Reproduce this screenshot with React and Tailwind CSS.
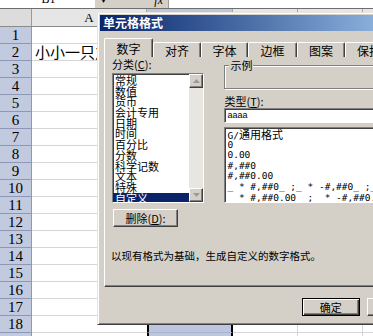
import React from "react";

const cats = ["常规", "数值", "货币", "会计专用", "日期", "时间", "百分比", "分数", "科学记数", "文本", "特殊", "自定义"];
const formats = [
  "0",
  "0.00",
  "#,##0",
  "#,##0.00",
  '_ * #,##0_ ;_ * -#,##0_ ;_ * "-"_ ;_ @_ ',
  '_ * #,##0.00_ ;_ * -#,##0.00_ ;_ * "-"??_ ;_ @_ ',
];
const tabs = [
  { label: "数字", w: "w-[49px]" },
  { label: "对齐", w: "w-[48px]" },
  { label: "字体", w: "w-[47px]" },
  { label: "边框", w: "w-[49px]" },
  { label: "图案", w: "w-[48px]" },
  { label: "保护", w: "w-[48px]" },
];
const rows = Array.from({ length: 19 }, (_, i) => i + 1);

// raised / sunken win98 style edges
const raised = "border-t border-l border-white border-r border-b border-r-[#404040] border-b-[#404040] shadow-[inset_-1px_-1px_0_#808080]";
const sunken = "border-t border-l border-[#808080] border-r border-b border-r-white border-b-white shadow-[inset_1px_1px_0_#404040]";

function Arrow({ down }) {
  return (
    <div className={`w-[14px] h-[14px] bg-[#d4d0c8] flex items-center justify-center ${raised}`}>
      <svg width="7" height="4" viewBox="0 0 7 4">
        {down ? <path d="M0 0h7L3.5 4z" fill="#9a9a9a" /> : <path d="M0 4h7L3.5 0z" fill="#9a9a9a" />}
      </svg>
    </div>
  );
}

function Mnemonic({ text, k }) {
  return (
    <span>
      {text}(<span className="underline">{k}</span>):
    </span>
  );
}

export default function App() {
  return (
    <div className="relative w-[373px] h-[336px] overflow-hidden bg-white text-black font-['Liberation_Serif',serif]">
      {/* formula bar, cut at top */}
      <div className="flex h-[9px] border-b border-[#6e6e6e]">
        <div className="w-[95px] h-full overflow-hidden">
          <div className="-mt-[7px] text-center text-[12px] leading-[12px] pl-[2px]">B1</div>
        </div>
        <div className="w-[73px] h-full overflow-hidden bg-[#d4d0c8] flex justify-between px-[5px]">
          <span className="-mt-[3px] text-[7px] leading-[8px]">▼</span>
          <span className="-mt-[6px] text-[12px] leading-[12px] italic">fx</span>
        </div>
        <div className="flex-1 h-full bg-white border-l border-[#9a9a9a]" />
      </div>

      {/* column headers */}
      <div className="flex h-[18px] border-b border-[#8a8a8a]">
        <div className="w-[32px] bg-[#dcdcdc] border-r border-[#9a9a9a]" />
        <div className="w-[115px] bg-[#e6e6e6] border-r border-[#a8a8a8] text-center text-[13px] leading-[18px]">A</div>
        <div className="w-[86px] bg-[#bcc6de] border-r border-[#a8a8a8]" />
        <div className="w-[65px] bg-[#e6e6e6] border-r border-[#a8a8a8]" />
        <div className="w-[65px] bg-[#e6e6e6] border-r border-[#a8a8a8]" />
        <div className="flex-1 bg-[#e6e6e6]" />
      </div>

      {/* grid rows */}
      {rows.map((r) => (
        <div key={r} className="flex h-[17px]">
          <div className="w-[32px] bg-[#c2cadf] border-b border-r border-[#8e98b6] text-center text-[15px] leading-[16px]">{r}</div>
          <div className="w-[115px] border-b border-[#d6d6d6] overflow-hidden whitespace-nowrap pl-[3px] text-[15px] leading-[16px] font-['Noto_Sans_CJK_SC',sans-serif]">
            {r === 2 ? "小小一只之" : ""}
          </div>
          <div className="w-[86px] bg-[#bcc6de] border-b border-[#aab4cc] border-x-2 border-x-black" />
          <div className="w-[65px] border-b border-r border-[#d6d6d6]" />
          <div className="w-[65px] border-b border-r border-[#d6d6d6]" />
          <div className="flex-1 border-b border-[#d6d6d6]" />
        </div>
      ))}

      {/* dialog */}
      <div className="absolute left-[97px] top-[12px] w-[330px] h-[313px] bg-[#d4d0c8] p-[2px] border border-[#e8e6e0] border-r-[#404040] border-b-[#404040] shadow-[inset_1px_1px_0_#fff,inset_-1px_-1px_0_#808080] font-['Noto_Sans_CJK_SC',sans-serif] text-[11px]">
        <div className="h-[16px] bg-linear-to-r from-[#0a246a] to-[#a6caf0] pl-[3px] text-white font-bold text-[12px] leading-[16px]">
          单元格格式
        </div>

        {/* tabs */}
        <div className="relative z-10 flex items-end h-[19px] mt-[7px] ml-[4px]">
          {tabs.map((t, i) => (
            <div
              key={t.label}
              className={`${t.w} ${i === 0 ? "h-[19px] pt-[3px]" : "h-[15px] pt-[1px]"} bg-[#d4d0c8] rounded-t-[2px] border-t border-l border-white border-r border-r-[#404040] shadow-[inset_-1px_0_0_#808080] text-center text-[12px] leading-[13px]`}
            >
              {t.label}
            </div>
          ))}
        </div>

        {/* tab panel */}
        <div className={`-mt-px ml-[4px] w-[400px] h-[231px] pl-[7px] ${raised}`}>
          <div className="flex">
            <div className="w-[103px]">
              <div className="h-[14px] leading-[14px]">
                <Mnemonic text="分类" k="C" />
              </div>
              <div className={`mt-[2px] h-[130px] flex bg-white ${sunken}`}>
                <div className="flex-1 pt-px overflow-hidden">
                  {cats.map((c, i) => (
                    <div
                      key={c}
                      className={`h-[10.7px] leading-[10.7px] pl-[2px] whitespace-nowrap ${i === cats.length - 1 ? "bg-[#0a246a] text-white" : ""}`}
                    >
                      {c}
                    </div>
                  ))}
                </div>
                <div className="w-[14px] flex flex-col justify-between bg-[#e8e6e1]">
                  <Arrow />
                  <Arrow down />
                </div>
              </div>
              <div className={`mt-[6px] ml-[1px] w-[65px] h-[18px] flex items-center justify-center ${raised}`}>
                <Mnemonic text="删除" k="D" />
              </div>
            </div>

            <div className="ml-[20px] flex-1">
              <div className="relative mt-[8px] h-[24px] border border-[#808080] shadow-[inset_1px_1px_0_#fff,1px_1px_0_#fff]">
                <span className="absolute -top-[8px] left-[4px] bg-[#d4d0c8] px-px leading-[14px]">示例</span>
              </div>
              <div className="mt-[5px] h-[14px] leading-[14px]">
                <Mnemonic text="类型" k="T" />
              </div>
              <div className={`h-[15px] bg-white pl-[2px] text-[9px] leading-[13px] font-['Liberation_Sans',sans-serif] ${sunken}`}>
                aaaa
              </div>
              <div className={`mt-[4px] h-[76px] bg-white overflow-hidden pt-px ${sunken}`}>
                <div className="h-[10.6px] leading-[10.6px] pl-[2px] whitespace-pre font-['DejaVu_Sans_Mono',monospace] text-[9.5px]">
                  G/<span className="font-['Noto_Sans_CJK_SC',sans-serif] text-[11px]">通用格式</span>
                </div>
                {formats.map((f) => (
                  <div
                    key={f}
                    className="h-[10.6px] leading-[10.6px] pl-[2px] whitespace-pre font-['DejaVu_Sans_Mono',monospace] text-[9.5px]"
                  >
                    {f}
                  </div>
                ))}
              </div>
            </div>
          </div>

          <div className="mt-[22px] -ml-px h-[14px] leading-[14px] text-[10.5px]">
            以现有格式为基础，生成自定义的数字格式。
          </div>
        </div>

        {/* buttons */}
        <div className="flex mt-[11px] ml-[202px]">
          <div className="w-[65px] h-[18px] flex items-center justify-center border border-black shadow-[inset_1px_1px_0_#fff,inset_-1px_-1px_0_#404040,inset_-2px_-2px_0_#808080]">
            确定
          </div>
          <div className={`ml-[7px] w-[65px] h-[18px] flex items-center justify-center ${raised}`}>取消</div>
        </div>
      </div>
    </div>
  );
}
